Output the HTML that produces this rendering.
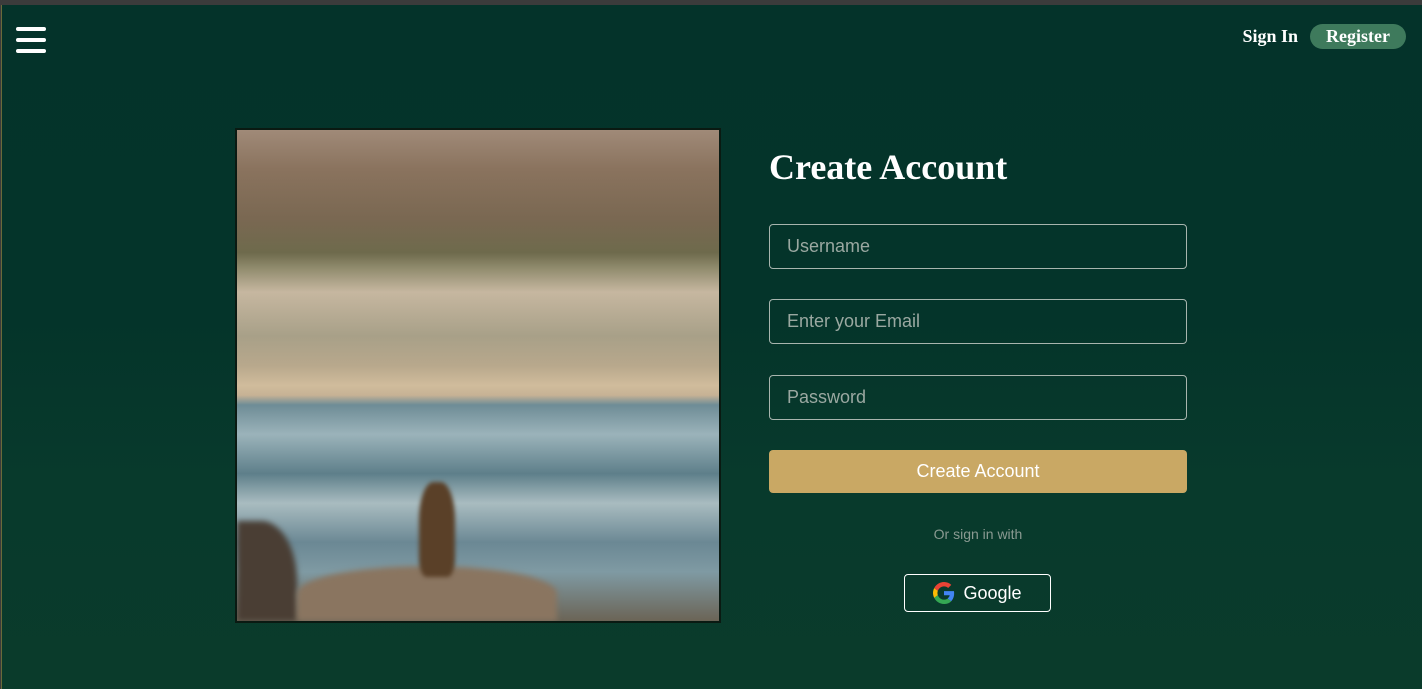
<!DOCTYPE html>
<html><head><style>
*{margin:0;padding:0;box-sizing:border-box}
body{width:1422px;height:689px;overflow:hidden;background:#3b3b3b;font-family:"Liberation Sans",sans-serif;position:relative}
.main{position:absolute;left:1px;top:5px;right:0;bottom:0;background:linear-gradient(180deg,#04332a 0%,#04342a 45%,#083a2c 70%,#0a3b2b 100%);border-left:1px solid #6a6a3a}
.ham{position:absolute;left:14px;top:22px;width:30px}
.ham div{height:4px;border-radius:2px;background:#fff;margin-bottom:7px}
.nav{position:absolute;top:19px;right:16px;display:flex;align-items:center;font-family:"Liberation Serif",serif;font-weight:bold;font-size:18px;color:#fff}
.reg{background:#3e7a5c;border-radius:14px;padding:2px 16px;margin-left:12px}
.img{position:absolute;left:235px;top:128px;width:486px;height:495px;border:2px solid #0a1a12;overflow:hidden;
background:linear-gradient(180deg,#a08a78 0%,#8a735e 8%,#7a6852 18%,#6e6a4c 25%,#8f8a6c 28%,#c6b7a0 33%,#a8a088 42%,#b8a88c 48%,#d0bc9c 52%,#c7b295 54%,#6e8c96 56%,#9bb3ba 62%,#5e7f8a 70%,#a9bcc0 76%,#6b8894 84%,#7f9aa3 90%,#6b6456 100%)}
.rock{position:absolute;left:60px;bottom:0;width:260px;height:55px;background:#8a7560;border-radius:50% 50% 0 0;filter:blur(3px)}
.rock2{position:absolute;left:0;bottom:0;width:60px;height:100px;background:#4a3e34;border-radius:0 60% 0 0;filter:blur(3px)}
.girl{position:absolute;left:182px;top:352px;width:36px;height:95px;background:#5a4028;border-radius:40% 40% 20% 20%;filter:blur(2px)}
h1{position:absolute;left:769px;top:146px;font-family:"Liberation Serif",serif;font-size:36px;color:#fff;font-weight:bold}
.in{position:absolute;left:769px;width:418px;height:45px;border:1px solid #a8b5ae;border-radius:4px;color:#9aa8a1;font-size:18px;padding:11px 17px}
.btn{position:absolute;left:769px;top:450px;width:418px;height:43px;background:#c9a864;border-radius:4px;color:#fff;font-size:18px;text-align:center;line-height:43px}
.or{position:absolute;left:769px;width:418px;top:526px;text-align:center;color:#8a9a92;font-size:14px}
.g{position:absolute;left:904px;top:574px;width:147px;height:38px;border:1px solid #fff;border-radius:4px;color:#fff;font-size:18px;display:flex;align-items:center;justify-content:center;gap:8px}
</style></head><body>
<div class="main">
<div class="ham"><div></div><div></div><div></div></div>
<div class="nav"><span>Sign In</span><span class="reg">Register</span></div>
</div>
<div class="img"><div class="rock2"></div><div class="rock"></div><div class="girl"></div></div>
<h1>Create Account</h1>
<div class="in" style="top:224px">Username</div>
<div class="in" style="top:299px">Enter your Email</div>
<div class="in" style="top:375px">Password</div>
<div class="btn">Create Account</div>
<div class="or">Or sign in with</div>
<div class="g"><svg width="22" height="22" viewBox="0 0 48 48"><path fill="#EA4335" d="M24 9.5c3.5 0 6.6 1.2 9.1 3.6l6.8-6.8C35.8 2.4 30.2 0 24 0 14.6 0 6.6 5.4 2.7 13.3l7.9 6.1C12.5 13.7 17.8 9.5 24 9.5z"/><path fill="#4285F4" d="M46.1 24.5c0-1.6-.1-3.1-.4-4.5H24v9h12.4c-.5 2.9-2.2 5.3-4.6 6.9l7.7 6c4.5-4.1 6.6-10.2 6.6-17.4z"/><path fill="#FBBC05" d="M10.5 28.6c-.5-1.4-.8-3-.8-4.6s.3-3.2.8-4.6l-7.9-6.1C1 16.6 0 20.2 0 24s1 7.4 2.7 10.7l7.8-6.1z"/><path fill="#34A853" d="M24 48c6.5 0 11.9-2.1 15.9-5.8l-7.7-6c-2.1 1.4-4.9 2.3-8.2 2.3-6.2 0-11.5-4.2-13.4-9.9l-7.9 6.1C6.6 42.6 14.6 48 24 48z"/></svg>Google</div>
</body></html>
